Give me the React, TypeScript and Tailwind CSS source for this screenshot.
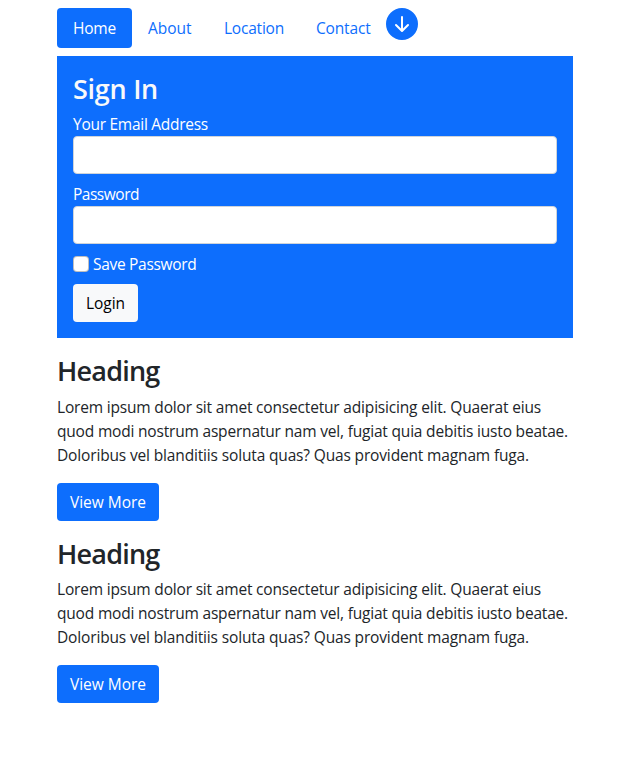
import React from "react";

/* Keeps a line of text at a fixed measure, whatever the font's own advance widths. */
function Fit({ text, width }: { text: string; width: number }) {
  const ref = React.useRef<HTMLSpanElement>(null);
  React.useLayoutEffect(() => {
    const el = ref.current;
    if (!el) return;
    const fit = () => {
      el.style.letterSpacing = "0px";
      const natural = el.getBoundingClientRect().width;
      el.style.letterSpacing = `${(width - natural) / text.length}px`;
    };
    fit();
    document.fonts.ready.then(fit);
  }, [text, width]);
  return <span ref={ref} className="inline-block whitespace-nowrap">{text}</span>;
}

const NavLink = ({ label, textWidth, className }: { label: string; textWidth: number; className: string }) => (
  <a href="#" className={`flex h-10 items-center pl-4 ${className}`}>
    <Fit text={label} width={textWidth} />
  </a>
);

const lines = [
  { text: "Lorem ipsum dolor sit amet consectetur adipisicing elit. Quaerat eius", width: 484 },
  { text: "quod modi nostrum aspernatur nam vel, fugiat quia debitis iusto beatae.", width: 511 },
  { text: "Doloribus vel blanditiis soluta quas? Quas provident magnam fuga.", width: 472 },
];

function Article({ headingHeight }: { headingHeight: string }) {
  return (
    <article className="pt-4">
      <h2 className={`mb-2 text-[27px] leading-[34px] font-[550] ${headingHeight}`}>
        <Fit text="Heading" width={102.5} />
      </h2>
      <p className="mb-4">
        {lines.map((l) => (
          <span key={l.text} className="block h-6">
            <Fit text={l.text} width={l.width} />
          </span>
        ))}
      </p>
      <button className="flex h-[38px] w-[102px] items-center rounded bg-[#0d6efd] pl-[13px] text-white">
        <Fit text="View More" width={76} />
      </button>
    </article>
  );
}

export default function App() {
  return (
    <div className="min-h-[760px] bg-white pt-2 font-['Open_Sans','Noto_Sans',sans-serif] text-[15.5px] leading-6 text-[#212529]">
      <main className="mx-auto w-[516px]">
        <nav className="mb-2 flex h-10 text-[#0d6efd]">
          <NavLink label="Home" textWidth={43} className="w-[75px] rounded bg-[#0d6efd] text-white" />
          <NavLink label="About" textWidth={43.5} className="w-[76px]" />
          <NavLink label="Location" textWidth={60} className="w-[92px]" />
          <NavLink label="Contact" textWidth={54.5} className="w-[86px]" />
          <svg width="32" height="32" viewBox="0 0 16 16" fill="#0d6efd">
            <path d="M16 8A8 8 0 1 1 0 8a8 8 0 0 1 16 0zM8.5 4.5a.5.5 0 0 0-1 0v5.793L5.354 8.146a.5.5 0 1 0-.708.708l3 3a.5.5 0 0 0 .708 0l3-3a.5.5 0 0 0-.708-.708L8.5 10.293V4.5z" />
          </svg>
        </nav>
        <form className="h-[282px] bg-[#0d6efd] p-4 text-white">
          <h2 className="mb-1.5 h-[34px] text-[27px] leading-[34px] font-semibold text-[#f8f9fa]">
            <Fit text="Sign In" width={85} />
          </h2>
          <label className="block h-6"><Fit text="Your Email Address" width={135} /></label>
          <input className="mb-2 block h-[38px] w-full rounded border border-[#ced4da] bg-white" />
          <label className="block h-6"><Fit text="Password" width={66} /></label>
          <input type="password" className="mb-2 block h-[38px] w-full rounded border border-[#ced4da] bg-white" />
          <label className="mb-2 flex h-6 items-center gap-1">
            <input type="checkbox" className="size-4 appearance-none rounded border border-black/25 bg-white" />
            <Fit text="Save Password" width={103.5} />
          </label>
          <button className="flex h-[38px] w-[65px] items-center rounded bg-[#f8f9fa] pl-[13px] text-black">
            <Fit text="Login" width={39} />
          </button>
        </form>
        <Article headingHeight="h-[33px]" />
        <Article headingHeight="h-8" />
      </main>
    </div>
  );
}
